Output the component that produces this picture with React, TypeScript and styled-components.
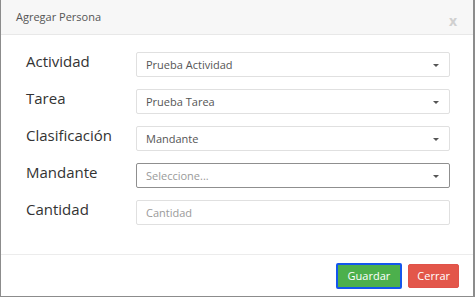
import React from 'react'
import styled, { createGlobalStyle } from 'styled-components'

const Global = createGlobalStyle`
    html, body {
        margin: 0;
        padding: 0;
        background: #fff;
    }
    * {
        box-sizing: border-box;
    }
`

const Modal = styled.div`
    width: 475px;
    height: 297px;
    border: 1px solid #8c8c8c;
    border-top: none;
    border-right-width: 2px;
    display: flex;
    flex-direction: column;
    font-family: "Open Sans", "Liberation Sans", sans-serif;
    background: #fff;
`

const Header = styled.div`
    height: 35px;
    background: #f7f7f7;
    border-bottom: 1px solid #e8e8e8;
    display: flex;
    align-items: center;
    justify-content: space-between;
    padding: 0 16px 0 15px;
    > .title {
        font-size: 11px;
        color: #555;
        margin-top: -2px;
    }
    > .close {
        font-size: 14px;
        font-weight: 700;
        color: #d0d0d0;
        margin-top: 7px;
    }
`

const Body = styled.div`
    flex: 1;
    padding: 17px 23px 0 25px;
    display: flex;
    flex-direction: column;
    gap: 12px;
`

const Row = styled.div`
    display: flex;
    align-items: flex-start;
    > label {
        width: 110px;
        font-size: 15px;
        line-height: 20px;
        margin-top: -1px;
        color: #333;
    }
`

const Field = styled.div<{ $focus?: boolean; $placeholder?: boolean }>`
    flex: 1;
    height: 25px;
    border: 1px solid ${p => (p.$focus ? '#8f8f8f' : '#e0e0e0')};
    border-radius: 2px;
    display: flex;
    align-items: center;
    justify-content: space-between;
    padding: 0 10px 0 9px;
    font-size: 11px;
    color: ${p => (p.$placeholder ? '#9a9a9a' : '#555')};
`

const Caret = styled.span`
    width: 0;
    height: 0;
    border-left: 3px solid transparent;
    border-right: 3px solid transparent;
    border-top: 3px solid #555;
    margin-top: 1px;
`

const Footer = styled.div`
    height: 42px;
    border-top: 1px solid #ececec;
    display: flex;
    justify-content: flex-end;
    align-items: center;
    gap: 6px;
    padding: 0 14px 0 0;
`

const Button = styled.button<{ $kind: 'save' | 'close' }>`
    height: ${p => (p.$kind === 'save' ? '26px' : '24px')};
    border-radius: 2px;
    font-family: "Open Sans", "Liberation Sans", sans-serif;
    font-size: 11px;
    color: #fff;
    padding: 0 ${p => (p.$kind === 'save' ? '10px' : '8px')};
    background: ${p => (p.$kind === 'save' ? '#4cb04c' : '#e3564a')};
    border: ${p => (p.$kind === 'save' ? '2px solid #1456ee' : '1px solid #e0524a')};
    cursor: pointer;
`

const rows = [
    { label: 'Actividad', value: 'Prueba Actividad', select: true },
    { label: 'Tarea', value: 'Prueba Tarea', select: true },
    { label: 'Clasificación', value: 'Mandante', select: true },
    { label: 'Mandante', value: 'Seleccione...', select: true, placeholder: true, focus: true },
    { label: 'Cantidad', value: 'Cantidad', select: false, placeholder: true },
]

export default function App() {
    return (<>
        <Global />
        <Modal>
            <Header>
                <span className="title">Agregar Persona</span>
                <span className="close">x</span>
            </Header>
            <Body>
                {rows.map(r => (
                    <Row key={r.label}>
                        <label>{r.label}</label>
                        <Field $focus={r.focus} $placeholder={r.placeholder}>
                            <span>{r.value}</span>
                            {r.select && <Caret />}
                        </Field>
                    </Row>
                ))}
            </Body>
            <Footer>
                <Button $kind="save">Guardar</Button>
                <Button $kind="close">Cerrar</Button>
            </Footer>
        </Modal>
    </>)
}
